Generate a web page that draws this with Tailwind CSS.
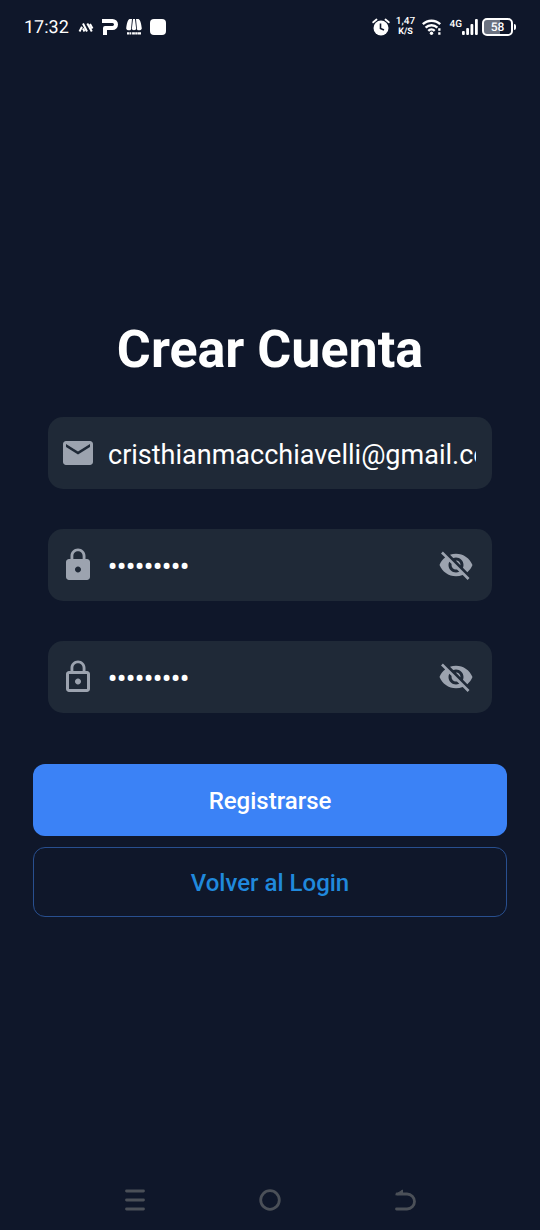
<!DOCTYPE html>
<html lang="es">
<head>
<meta charset="utf-8">
<meta name="viewport" content="width=device-width, initial-scale=1">
<title>Crear Cuenta</title>
<script src="https://cdn.jsdelivr.net/npm/@tailwindcss/browser@4"></script>
</head>
<body class="flex min-h-screen flex-col bg-[#0f172a] font-[Roboto,sans-serif] text-white [text-rendering:geometricPrecision]">

<!-- Status bar -->
<header class="flex h-[54px] items-center justify-between px-6">
  <div class="flex items-center">
    <span class="w-[54px] pt-0.5 text-[18px] leading-6">17:32</span>
    <svg class="mr-2 h-4 w-4" viewBox="0 0 16 16" fill="none" stroke="#fff" stroke-width="2"><path d="M1.500 12.500 4 7.800M5 4.500l4 8M6.500 12.500 5 9.500M9.300 4.500l4.500 8M12 5l2.500 4.500"/></svg>
    <svg class="mr-2 h-4 w-4" viewBox="0 0 16 16" fill="none" stroke="#fff" stroke-width="4"><path d="M0 2h10.500a3.500 3.500 0 0 1 0 7H3v7" stroke-linejoin="round"/></svg>
    <svg class="mr-2 h-4 w-4" viewBox="0 0 16 16" fill="#fff"><path d="M3.500 0H6L5 10.500C4 12 .5 11.500.2 9.500.7 5 1.500 1 3.500 0zM7 0h2l1.200 10c-.3 1.500-4.100 1.500-4.400 0zM10 0h2.500C14.500 1 15.300 5 15.800 9.500c-.3 2-3.800 2.500-4.800 1z"/><path d="M1 13.200h2v2.200H1zM3.400 13.200h1.900v2.200H3.400zM6.100 13.200h2.800v2.200H6.100zM9.200 13.200h2.300v2.200H9.200zM11.800 13.200H15v2.200h-3.200z"/></svg>
    <span class="h-4 w-4 rounded-[4px] bg-white"></span>
  </div>
  <div class="flex items-center">
    <svg class="mr-1.5 h-[18px] w-[18px]" viewBox="0 0 18 18"><circle cx="9" cy="10" r="7.500" fill="#fff"/><path d="M1.200 4.300 4.500 1.500M16.800 4.300 13.500 1.500" stroke="#fff" stroke-width="1.800" stroke-linecap="round"/><path d="M8.500 5.500v5l3.500 1.500" fill="none" stroke="#0f172a" stroke-width="1.600"/></svg>
    <span class="mr-1.5 flex w-5 flex-col items-center text-[10px] leading-[10px] font-medium"><span>1,47</span><span class="text-[9px] font-bold">K/S</span></span>
    <svg class="mr-2 h-[18px] w-5" viewBox="0 0 20 18" fill="none" stroke="#fff" stroke-width="2.400"><path d="M.8 6.200a12.500 12.500 0 0 1 17.400 0M3.600 9.600a8.500 8.500 0 0 1 11.800 0M6.300 12.800a4.600 4.600 0 0 1 6.400 0"/><circle cx="9.500" cy="15.300" r="1.700" fill="#fff" stroke="none"/><path d="M16.200 11.500h2.300M16.200 15.500h2.300"/></svg>
    <span class="h-4 text-[10px] leading-3 font-medium">4G</span>
    <svg class="mr-1 h-4 w-4" viewBox="0 0 16 16" fill="#fff"><rect y="12" width="2.800" height="4" rx="1"/><rect x="4.200" y="9" width="2.800" height="7" rx="1"/><rect x="8.500" y="5" width="2.800" height="11" rx="1"/><rect x="13" y="0" width="2.800" height="16" rx="1"/></svg>
    <span class="flex h-[18px] w-[31px] items-center justify-center rounded-[5px] border-2 border-white bg-linear-to-r from-[#6b7280] from-60% to-[#0f172a] to-60% text-[12px] leading-3 font-medium">58</span>
    <span class="ml-px h-1.5 w-0.5 rounded-r bg-white"></span>
  </div>
</header>

<main class="flex flex-1 flex-col justify-center px-[33px]">
  <h1 class="mt-3 mb-9 text-center text-[52px] leading-[62px] font-bold">Crear Cuenta</h1>
  <form class="flex flex-col">
    <div class="flex flex-col gap-10 px-[15px]">
      <div class="flex h-18 items-center rounded-[15px] bg-[#1f2937] pr-4 pl-3">
        <label for="email" aria-label="Correo" class="mr-3 shrink-0"><svg class="h-9 w-9" viewBox="0 0 24 24" fill="#9ca3af"><path d="M20 4H4c-1.100 0-1.990.9-1.990 2L2 18c0 1.100.9 2 2 2h16c1.100 0 2-.9 2-2V6c0-1.100-.9-2-2-2zm0 4l-8 5-8-5V6l8 5 8-5v2z"/></svg></label>
        <input id="email" type="email" value="cristhianmacchiavelli@gmail.com" class="h-11 min-w-0 flex-1 bg-transparent pt-1 text-[27px] outline-none">
      </div>
      <div class="flex h-18 items-center rounded-[15px] bg-[#1f2937] pr-[18px] pl-3">
        <label for="password" aria-label="Contraseña" class="mr-3 shrink-0"><svg class="h-9 w-9" viewBox="0 0 24 24" fill="#9ca3af"><path d="M18 8h-1V6c0-2.760-2.240-5-5-5S7 3.240 7 6v2H6c-1.100 0-2 .9-2 2v10c0 1.100.9 2 2 2h12c1.100 0 2-.9 2-2V10c0-1.100-.9-2-2-2zm-6 9c-1.100 0-2-.9-2-2s.9-2 2-2 2 .9 2 2-.9 2-2 2zm3.100-9H8.900V6c0-1.710 1.390-3.100 3.100-3.100 1.710 0 3.100 1.390 3.100 3.100v2z"/></svg></label>
        <input id="password" type="password" value="clave1234" class="h-11 min-w-0 flex-1 bg-transparent pt-0.5 text-[25px] font-bold outline-none">
        <button type="button" aria-label="Mostrar contraseña" class="shrink-0"><svg class="h-9 w-9" viewBox="0 0 24 24" fill="#9ca3af"><path d="M12 7c2.760 0 5 2.240 5 5 0 .65-.13 1.260-.36 1.830l2.920 2.920c1.510-1.260 2.700-2.890 3.430-4.750-1.730-4.390-6-7.500-11-7.500-1.400 0-2.740.25-3.980.7l2.160 2.160C10.740 7.130 11.350 7 12 7zM2 4.270l2.280 2.280.46.46C3.080 8.300 1.780 10.020 1 12c1.730 4.390 6 7.500 11 7.500 1.550 0 3.030-.3 4.380-.84l.42.42L19.730 22 21 20.730 3.270 3 2 4.270zM7.530 9.800l1.550 1.550c-.05.21-.08.43-.08.65 0 1.660 1.340 3 3 3 .22 0 .44-.03.65-.08l1.550 1.550c-.67.33-1.410.53-2.200.53-2.760 0-5-2.240-5-5 0-.79.2-1.530.53-2.200zm4.310-.78l3.150 3.150.02-.16c0-1.660-1.340-3-3-3l-.17.01z"/></svg></button>
      </div>
      <div class="flex h-18 items-center rounded-[15px] bg-[#1f2937] pr-[18px] pl-3">
        <label for="confirm" aria-label="Confirmar contraseña" class="mr-3 shrink-0"><svg class="h-9 w-9" viewBox="0 0 24 24" fill="#9ca3af"><path d="M12 17c1.100 0 2-.9 2-2s-.9-2-2-2-2 .9-2 2 .9 2 2 2zm6-9h-1V6c0-2.760-2.240-5-5-5S7 3.240 7 6v2H6c-1.100 0-2 .9-2 2v10c0 1.100.9 2 2 2h12c1.100 0 2-.9 2-2V10c0-1.100-.9-2-2-2zM8.900 6c0-1.710 1.390-3.100 3.100-3.100s3.100 1.390 3.100 3.100v2H8.900V6zM18 20H6V10h12v10z"/></svg></label>
        <input id="confirm" type="password" value="clave1234" class="h-11 min-w-0 flex-1 bg-transparent pt-0.5 text-[25px] font-bold outline-none">
        <button type="button" aria-label="Mostrar confirmación" class="shrink-0"><svg class="h-9 w-9" viewBox="0 0 24 24" fill="#9ca3af"><path d="M12 7c2.760 0 5 2.240 5 5 0 .65-.13 1.260-.36 1.830l2.920 2.920c1.510-1.260 2.700-2.890 3.430-4.750-1.730-4.390-6-7.500-11-7.500-1.400 0-2.740.25-3.980.7l2.160 2.160C10.740 7.130 11.350 7 12 7zM2 4.270l2.280 2.280.46.46C3.080 8.300 1.780 10.020 1 12c1.730 4.390 6 7.500 11 7.500 1.550 0 3.030-.3 4.380-.84l.42.42L19.730 22 21 20.730 3.270 3 2 4.270zM7.530 9.800l1.550 1.550c-.05.21-.08.43-.08.65 0 1.660 1.340 3 3 3 .22 0 .44-.03.65-.08l1.550 1.550c-.67.33-1.410.53-2.200.53-2.760 0-5-2.240-5-5 0-.79.2-1.530.53-2.200zm4.310-.78l3.150 3.150.02-.16c0-1.660-1.340-3-3-3l-.17.01z"/></svg></button>
      </div>
    </div>
    <button type="submit" class="mt-[51px] h-18 rounded-xl bg-[#3b82f6] pt-0.5 text-[24px] font-medium">Registrarse</button>
    <button type="button" class="mt-[11px] h-[70px] rounded-xl border border-[#284f8f] pt-0.5 text-[24px] font-medium text-[#2089dc]">Volver al Login</button>
  </form>
</main>

<!-- System navigation -->
<nav class="grid h-15 grid-cols-3 items-center justify-items-center px-[12.5%]" aria-label="Sistema">
  <button type="button" aria-label="Recientes"><svg class="h-6 w-6" viewBox="0 0 24 24" stroke="#4b5058" stroke-width="2.800" stroke-linecap="round"><path d="M3.500 3h17M3.500 12h17M3.500 21h17"/></svg></button>
  <button type="button" aria-label="Inicio"><svg class="h-6 w-6" viewBox="0 0 24 24" fill="none" stroke="#4b5058" stroke-width="2.800"><circle cx="12" cy="12" r="9.300"/></svg></button>
  <button type="button" aria-label="Atrás"><svg class="h-6 w-6" viewBox="0 0 24 24" fill="none" stroke="#4b5058" stroke-width="2.800" stroke-linecap="round" stroke-linejoin="round"><path d="M3.500 21H14a7.500 7.500 0 0 0 0-15H4"/><path d="M3 6.500 9.500 2v4z" fill="#4b5058" stroke-width="1"/></svg></button>
</nav>
</body>
</html>
